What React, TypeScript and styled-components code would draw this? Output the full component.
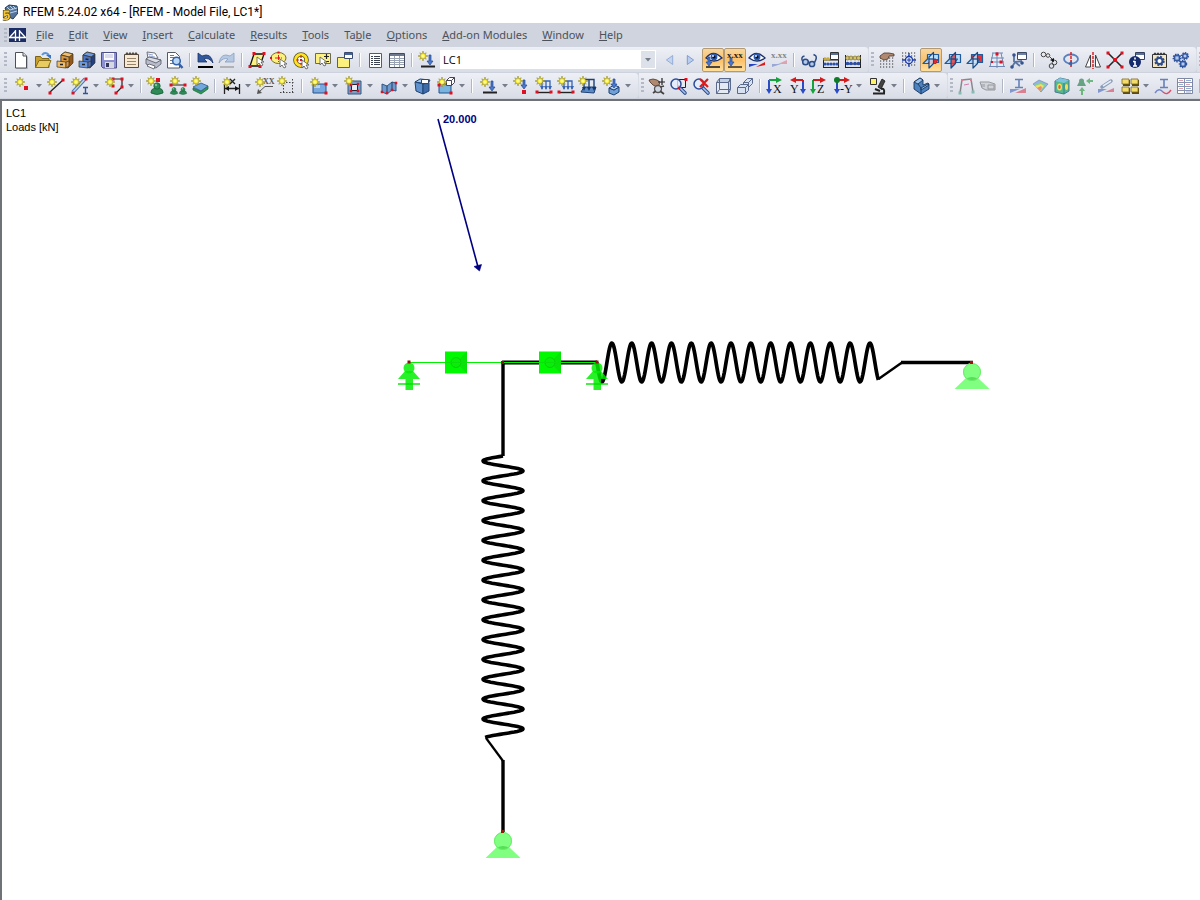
import React from "react";
import styled, { createGlobalStyle, css } from "styled-components";

const GlobalStyle = createGlobalStyle`
  *, *::before, *::after { box-sizing: border-box; }
  body { margin: 0; background: #fff; }
`;

/* ---------- shared icon parts ---------- */

type At = { x: number; y: number };

const Star = ({ x, y }: At) => (
  <g transform={`translate(${x} ${y})`}>
    <path
      d="M0-5L.9-2L3.200-3.200L2-.9L5 0L2 .9L3.200 3.200L.9 2L0 5L-.9 2L-3.200 3.200L-2 .9L-5 0L-2-.9L-3.200-3.200L-.9-2z"
      fill="#ffef30"
      stroke="#8f8628"
      strokeWidth=".6"
    />
    <circle r="1.500" fill="#fffb90" />
  </g>
);

const Dot = ({ x, y, s = 3, c = "#e01020" }: At & { s?: number; c?: string }) => (
  <rect x={x - s / 2} y={y - s / 2} width={s} height={s} fill={c} />
);

const Cursor = ({ x, y }: At) => (
  <path d={`M${x} ${y}v8l2-2 2 3 2-1-2-3h3z`} fill="#fff" stroke="#555" strokeWidth=".8" />
);

const DownArrow = ({ x, y, h = 8 }: At & { h?: number }) => (
  <path d={`M${x - 1} ${y}h2v${h - 4}h2l-3 4-3-4h2z`} fill="#4a78d0" stroke="#24488f" strokeWidth=".7" />
);

const DottedGrid = ({ x, y, w, h }: At & { w: number; h: number }) => (
  <g stroke="#333" strokeWidth="1.2" strokeDasharray="1.2 1.8">
    {Array.from({ length: Math.floor(h / 3) + 1 }, (_, i) => (
      <path key={i} d={`M${x} ${y + i * 3}h${w}`} />
    ))}
  </g>
);

const Glass = ({ x, y }: At) => (
  <g>
    <path d={`M${x + 3} ${y + 3}l6 6`} stroke="#2c4c8c" strokeWidth="3.600" strokeLinecap="round" />
    <path d={`M${x + 4} ${y + 4}l5 5`} stroke="#a8c4ee" strokeWidth="1.600" strokeLinecap="round" />
    <circle cx={x} cy={y} r="5" fill="#e3edfb" fillOpacity=".8" stroke="#2b4a9a" strokeWidth="1.500" />
  </g>
);

const Eye = ({ x, y }: At) => (
  <g transform={`translate(${x} ${y})`}>
    <path d="M-8 1Q-1-8 8 1Q0 7-8 1z" fill="#fff" stroke="#1d2f66" strokeWidth="1.300" />
    <circle r="3.400" fill="#2d5cb0" />
    <circle r="1.600" fill="#06102e" />
    <circle cx="-1" cy="-1" r=".9" fill="#fff" />
  </g>
);

const Axis = ({ letter, vertical, horizontal, flip, dot }: { letter: string; vertical: string; horizontal: string; flip?: boolean; dot?: boolean }) => (
  <g>
    <g transform={flip ? "translate(20 0) scale(-1 1)" : undefined}>
      <path d="M4 4v11" stroke={vertical} strokeWidth="2" />
      <path d="M1 13h6l-3 5z" fill={vertical} />
      <path d="M4 4h9" stroke={horizontal} strokeWidth="2" />
      <path d="M11 1l6 3-6 3z" fill={horizontal} />
      {dot && <circle cx="4" cy="4" r="3" fill="#0c7c28" />}
    </g>
    <text x={flip ? 3 : letter.length > 1 ? 7 : 8} y="17" fontFamily="Liberation Serif, serif" fontSize="12" fill="#111">
      {letter}
    </text>
  </g>
);

const Cabinet = ({ light, mid, dark }: { light: string; mid: string; dark: string }) => (
  <g stroke="#3b3222" strokeWidth=".7">
    <path d="M6 5l4-3 8 2v9l-5 5-7-2z" fill={dark} />
    <path d="M6 5l4-3 8 2-4 3z" fill={light} />
    <path d="M6 5l8 2v6l-8-1z" fill={mid} />
    <path d="M2 11l9 1v6l-9-1z" fill={light} />
    <path d="M11 12l3-1v5l-3 2z" fill={mid} />
    <path d="M8.500 9l3 .500M5 14.500h3" stroke="#222" strokeWidth="1.500" />
  </g>
);

const Planes = ({ fill }: { fill: "h" | "v" | "f" }) => (
  <g strokeLinejoin="round" strokeWidth="1.200">
    <path d="M6.500 4.500h11v8h-11z" fill={fill === "f" ? "#ee3030" : "#b9dcf6"} stroke="#1f5a9c" />
    <path d="M2 13.500l4.500-4.500h8l-3 4.500z" fill="#b5d6f4" fillOpacity=".9" stroke="#1f5a9c" />
    {fill === "h" && <path d="M7 13.500l3-4h7l-2 4z" fill="#e82828" stroke="#a01c28" strokeWidth=".8" />}
    <path d="M8 7l4.500-4.500v11L8 18z" fill={fill === "v" ? "#e83a3a" : "#d4e8fa"} fillOpacity=".8" stroke="#174a86" />
    <path d="M8 9h4.500" stroke="#174a86" />
  </g>
);

const Support = ({ x, y, s = 1, c = "#2e8b57" }: At & { s?: number; c?: string }) => (
  <g transform={`translate(${x} ${y}) scale(${s})`}>
    <path d="M-6 5q0-3 4-4h4q4 1 4 4v1q-6 3-12 0z" fill={c} stroke="#145f34" strokeWidth=".8" />
    <circle cy="-1" r="3.200" fill={c} stroke="#145f34" strokeWidth=".8" />
    <circle cx="-1" cy="-2" r="1.200" fill="#7cc79a" />
  </g>
);

const Gear = ({ x, y, r = 2.4 }: At & { r?: number }) => (
  <g fill="none" stroke="#2e539c">
    <circle cx={x} cy={y} r={r + 0.9} strokeWidth="1.500" strokeDasharray="1.400 1.100" />
    <circle cx={x} cy={y} r={r} fill="#7f9fd8" strokeWidth="1.200" />
    <circle cx={x} cy={y} r=".8" fill="#fff" stroke="none" />
  </g>
);

/* ---------- icons, each on a 20 x 20 grid ---------- */

const icons: Record<string, React.ReactNode> = {
  new: (
    <g>
      <path d="M5 3h8l4 4v12H5z" fill="#b8bcc6" />
      <path d="M4.500 2.500h7.500l3.500 3.500v12h-11z" fill="#fff" stroke="#4c5058" />
      <path d="M12 2.500v3.500h3.500" fill="#e0e3ea" stroke="#4c5058" />
    </g>
  ),
  open: (
    <g>
      <path d="M2.500 17.500v-11h5l1.500 2h7v9z" fill="#c79f2c" stroke="#7b6315" />
      <path d="M2.500 17.500l3.500-7h12l-3 7z" fill="#e8cc62" stroke="#8b7019" />
      <path d="M9 5q3-4 7 0" fill="none" stroke="#5a94d8" strokeWidth="2" />
      <path d="M13 5h5v4z" fill="#3a73c4" />
    </g>
  ),
  cabinet: <Cabinet light="#f0bd6c" mid="#d9963d" dark="#94591a" />,
  cabinetBlue: <Cabinet light="#6f9ae0" mid="#4a74c8" dark="#24407f" />,
  save: (
    <g>
      <path d="M2.500 2.500h15v15.500H4l-1.500-1.500z" fill="#8c8fd2" stroke="#4c4f88" />
      <path d="M5 3h10v7H5z" fill="#fbfbff" />
      <path d="M6 5h8M6 7h8" stroke="#b7bad8" />
      <path d="M6 12h9v6H6z" fill="#d6d8e2" />
      <path d="M7 13h3v4H7z" fill="#34375c" />
    </g>
  ),
  notes: (
    <g>
      <path d="M3.500 4.500h14v13h-14z" fill="#f7e9d2" stroke="#54493c" />
      <path d="M5 4.500q1-3 2 0M8 4.500q1-3 2 0M11 4.500q1-3 2 0M14 4.500q1-3 2 0" fill="none" stroke="#54493c" strokeWidth="1.300" />
      <path d="M6 8.500h9M6 11.500h9M6 14.500h9" stroke="#96856b" />
    </g>
  ),
  print: (
    <g stroke="#60636e" strokeWidth=".9">
      <path d="M5 9l-1-7 8 1 3 5z" fill="#fff" />
      <path d="M3 9l3-2 12 3v4l-5 4L3 14z" fill="#b9bccb" />
      <path d="M3 9l3-2 12 3-5 3z" fill="#dddfe8" />
      <path d="M6 14l6 2-1 3-7-3z" fill="#fff" />
      <path d="M6 6l6 1M5 4l5 1" stroke="#8a9cc8" />
    </g>
  ),
  preview: (
    <g>
      <path d="M2.500 2.500h8l4 4v11.500h-12z" fill="#fff" stroke="#555a62" />
      <path d="M5 7.500h5M5 10.500h4M5 13.500h3M5 5.500h4" stroke="#777" />
      <circle cx="11.500" cy="11" r="3.800" fill="#b9d7f6" stroke="#3562a6" strokeWidth="1.500" />
      <path d="M14 14l3.500 4" stroke="#3562a6" strokeWidth="2.500" />
    </g>
  ),
  undo: (
    <g>
      <path d="M7 6q9-4 11 7q-4-6-9-4l3 3H3V3z" fill="#31599e" stroke="#1a3468" strokeWidth=".8" />
      <path d="M3 17h15" stroke="#000" strokeWidth="2" />
    </g>
  ),
  redo: (
    <g opacity=".65">
      <path d="M13 6q-9-4-11 7q4-6 9-4l-3 3h9V3z" fill="#9dbade" stroke="#5a7aa8" strokeWidth=".8" />
      <path d="M3 17h14" stroke="#888" strokeWidth="1.600" />
    </g>
  ),
  selectPoly: (
    <g>
      <path d="M7 4h10l-4 12H3z" fill="#fbf080" stroke="#111" strokeWidth="1.300" />
      <Dot x={7} y={3.5} /><Dot x={17} y={3.5} /><Dot x={3} y={16.5} /><Dot x={13} y={16.5} />
      <Cursor x={10} y={7} />
    </g>
  ),
  selectEllipse: (
    <g>
      <ellipse cx="9.500" cy="8" rx="7.500" ry="5.500" fill="#fbf080" stroke="#7b6b22" />
      <path d="M9.500 5v7M6 8h7" stroke="#d22" strokeDasharray="2 1" />
      <Dot x={9.5} y={8} s={2} /><Dot x={2} y={8} s={2} /><Dot x={9.5} y={2.5} s={2} />
      <Cursor x={11} y={9} />
    </g>
  ),
  selectRing: (
    <g>
      <circle cx="10" cy="10" r="5.500" fill="#fff" stroke="#58501b" strokeWidth="4.600" />
      <circle cx="10" cy="10" r="5.500" fill="none" stroke="#ffe423" strokeWidth="3" />
      <path d="M10 5v3M5 10h3M10 13v2" stroke="#d22" strokeWidth="1.200" />
      <Dot x={10} y={10} s={2} />
      <Cursor x={11} y={10} />
    </g>
  ),
  selectPlus: (
    <g>
      <path d="M2.500 3.500h15v10h-15z" fill="#fbf080" stroke="#6c6a50" />
      <path d="M11 6.500h5M13.500 4v5M11 11.500h5" stroke="#222" strokeWidth="1.200" />
      <Cursor x={7} y={7} />
    </g>
  ),
  selectWindow: (
    <g>
      <path d="M2.500 7.500h12v10h-12z" fill="#fbef7e" stroke="#6c6420" />
      <path d="M9.500 2.500h8v6h-8z" fill="#fff" stroke="#3a4a6c" />
      <path d="M10 3h7v2h-7z" fill="#4064a0" />
    </g>
  ),
  list: (
    <g>
      <path d="M4.500 3.500h12v14h-12z" fill="#fff" stroke="#545b6a" />
      <path d="M6 6.500h2M9 6.500h6M6 8.500h2M9 8.500h6M6 10.500h2M9 10.500h6M6 12.500h2M9 12.500h6M6 14.500h2M9 14.500h6" stroke="#3b4250" />
    </g>
  ),
  table: (
    <g>
      <path d="M2.500 3.500h15v14h-15z" fill="#fff" stroke="#444b5a" />
      <path d="M3 4h14v2H3z" fill="#6c7890" />
      <path d="M3 8.500h14M3 10.500h14M3 12.500h14M3 14.500h14M7.500 6v11M12.500 6v11" stroke="#9aa3b4" />
    </g>
  ),
  newLoad: (
    <g>
      <DownArrow x={13} y={5} h={10} />
      <path d="M4 16.500h14" stroke="#222" strokeWidth="2" />
      <Star x={6} y={6} />
    </g>
  ),
  prev: <path d="M13 5L6 10l7 5z" fill="#c3d4ee" stroke="#8ea8d4" />,
  next: <path d="M7 5l7 5-7 5z" fill="#b9cdee" stroke="#7795cb" />,
  eyeLoad: (
    <g>
      <Eye x={11} y={7} />
      <DownArrow x={6} y={7} h={9} />
      <path d="M3 17h14" stroke="#222" strokeWidth="1.600" />
    </g>
  ),
  valueLoad: (
    <g>
      <text x="2" y="8" fontFamily="Liberation Serif, serif" fontSize="9" fontWeight="700" fill="#222">x.xx</text>
      <DownArrow x={6} y={8} h={8} />
      <path d="M3 17h14" stroke="#222" strokeWidth="1.400" />
    </g>
  ),
  eyeResult: (
    <g>
      <Eye x={10} y={7} />
      <path d="M2 17v-3l9 0z" fill="#2546c8" />
      <path d="M9 17l9-5v3z" fill="#dc1a1a" />
    </g>
  ),
  valueResult: (
    <g opacity=".6">
      <text x="2" y="8" fontFamily="Liberation Serif, serif" fontSize="9" fontWeight="700" fill="#444">x.xx</text>
      <path d="M3 17v-3h9z" fill="#6a80c8" />
      <path d="M9 14l9-4v4z" fill="#d87a8a" />
    </g>
  ),
  glasses: (
    <g fill="none" stroke="#2c4c86" strokeWidth="1.500">
      <circle cx="6.500" cy="12" r="2.800" fill="#b4c8e8" />
      <circle cx="13" cy="14" r="2.600" fill="#b4c8e8" />
      <path d="M3.500 11q-2-4 2-5M15.500 12.500q3-5 1-7l-2-1M9 12l2 1" />
    </g>
  ),
  abacusWindow: (
    <g>
      <path d="M2.500 8v10M17.500 8v10M2 10h16M2 17.500h16" stroke="#222" />
      {[4, 7, 10, 13, 16].map((x) => <circle key={x} cx={x} cy="14" r="1.600" fill="#2a4fa8" />)}
      {[4, 7].map((x) => <circle key={x} cx={x} cy="9" r="1.800" fill="#c8a93a" />)}
      <path d="M9.500 2.500h8v7h-8z" fill="#fff" stroke="#333" />
      <path d="M10 3h7v2h-7z" fill="#5a6f98" />
    </g>
  ),
  abacus: (
    <g>
      <path d="M2.500 5v13M17.500 5v13M2 8h16M2 14h16M2 17.500h16" stroke="#222" />
      {[4.5, 8, 12, 15.5].map((x) => <circle key={x} cx={x} cy="13.500" r="1.800" fill="#2a4fa8" />)}
      {[4.5, 8, 12, 15.5].map((x) => <circle key={x} cx={x} cy="8" r="2" fill="#d1c470" stroke="#6d5a16" strokeWidth=".6" />)}
    </g>
  ),
  handGrid: (
    <g>
      <DottedGrid x={3} y={8} w={15} h={9} />
      <path d="M3 6l4-3h5l5 1v2h-5l-1 3-4 1-4-2z" fill="#b08a70" stroke="#4c3325" strokeWidth=".8" />
    </g>
  ),
  snapGrid: (
    <g>
      <DottedGrid x={3} y={3} w={15} h={14} />
      <path d="M10 3v14M3 10h14" stroke="#1c3cac" strokeWidth="1.300" />
      <circle cx="10" cy="10" r="3.500" fill="#dfe7fa" stroke="#1c3cac" strokeWidth="1.300" />
      <path d="M10 8v4M8 10h4" stroke="#1c3cac" />
    </g>
  ),
  planeH: <Planes fill="h" />,
  planeV: <Planes fill="v" />,
  planeF: <Planes fill="f" />,
  tiltedGrid: (
    <g>
      <path d="M5 3h10l3 14H2z" fill="#e4ecf6" />
      <path d="M5 3h11M4 8h13M3 12h14M2 16.500h16M6 3L3 17M10 2v16M14 3l3 14" stroke="#7088b4" />
      <Dot x={10} y={4} /><Dot x={14} y={12} /><Dot x={5} y={12} s={2} />
    </g>
  ),
  windowTool: (
    <g>
      <path d="M8.500 2.500h9v7h-9z" fill="#fff" stroke="#3e4a62" />
      <path d="M9 3h8v2H9z" fill="#6c80aa" />
      <path d="M5 4v8M3 17l3-5 5 4M6 12l7-1" stroke="#5874a4" strokeWidth="1.800" fill="none" />
      <circle cx="5" cy="5" r="1.800" fill="#38548e" />
      <circle cx="3" cy="17" r="1.800" fill="#38548e" />
      <circle cx="13" cy="13" r="1.800" fill="#38548e" />
    </g>
  ),
  connect: (
    <g fill="none" stroke="#444">
      <circle cx="4.500" cy="4.500" r="2.300" />
      <circle cx="9" cy="5.500" r="1.800" fill="#eee" />
      <circle cx="15.500" cy="12.500" r="2.300" />
      <circle cx="12.500" cy="16" r="2.300" />
      <path d="M11 7l3 3" />
      <path d="M15 8v4l-4-2z" fill="#111" stroke="none" />
    </g>
  ),
  rotate: (
    <g>
      <ellipse cx="10" cy="9" rx="7" ry="4.500" fill="none" stroke="#5a80bd" strokeWidth="1.800" />
      <path d="M10 2v16" stroke="#d21818" strokeWidth="1.400" strokeDasharray="3 1" />
      <path d="M7 14l4-4v6z" fill="#3f62a4" />
    </g>
  ),
  mirror: (
    <g fill="#fff" stroke="#444">
      <path d="M7.500 5v12H2.500z" />
      <path d="M12.500 5v12h5z" />
      <path d="M10 2v17" stroke="#d21818" strokeWidth="1.400" strokeDasharray="3 1" />
    </g>
  ),
  cross: (
    <g>
      <path d="M3 3l14 14M17 3L3 17" stroke="#222" strokeWidth="1.500" />
      <Dot x={3} y={3} /><Dot x={17} y={3} /><Dot x={3} y={17} /><Dot x={17} y={17} />
      <Dot x={10} y={10} s={4} />
    </g>
  ),
  info: (
    <g>
      <path d="M8.500 2.500h9v7h-9z" fill="#fff" stroke="#333f5a" />
      <path d="M9 3h8v2H9z" fill="#5a6f98" />
      <circle cx="8" cy="12" r="6" fill="#132a6c" />
      <path d="M8 7.500v2M8 11v5M6 11.500h2M6 16h4" stroke="#fff" strokeWidth="1.600" />
    </g>
  ),
  gearBox: (
    <g>
      <path d="M3.500 4.500h14v13h-14z" fill="#f4e6c2" stroke="#333" />
      <path d="M5 4.500q1-3 2 0M8 4.500q1-3 2 0M11 4.500q1-3 2 0M14 4.500q1-3 2 0" fill="none" stroke="#333" strokeWidth="1.200" />
      <circle cx="10.500" cy="11" r="4.200" fill="none" stroke="#2d4c8c" strokeWidth="2" strokeDasharray="1.900 1.400" />
      <circle cx="10.500" cy="11" r="3" fill="#fff" stroke="#2d4c8c" strokeWidth="2" />
    </g>
  ),
  gears: <g><Gear x={6} y={8} r={2.8} /><Gear x={14} y={6} /><Gear x={12} y={14} r={2.6} /></g>,

  newNode: <g><Star x={7} y={6} /><Dot x={13} y={12} s={4} /></g>,
  newLine: (
    <g>
      <path d="M4 16L17 4" stroke="#222" strokeWidth="1.300" />
      <Star x={6} y={6} /><Dot x={4} y={17} /><Dot x={17} y={4} />
    </g>
  ),
  newMember: (
    <g>
      <path d="M3 16L15 3" stroke="#4d77b4" strokeWidth="3.500" />
      <path d="M3 16L15 3" stroke="#bcd6f2" strokeWidth="1.500" />
      <Star x={6} y={6} /><Dot x={3} y={17} /><Dot x={16} y={3} />
      <path d="M13 11.500h5M13 17.500h5M15.500 12v5" stroke="#30549a" strokeWidth="1.400" />
    </g>
  ),
  newPolyline: (
    <g>
      <path d="M8 3h9v8l-6 6" fill="none" stroke="#222" strokeWidth="1.200" />
      <Dot x={8} y={3} /><Dot x={17} y={3} /><Dot x={17} y={11} /><Dot x={11} y={17} /><Dot x={8} y={10} />
      <Star x={5} y={6} />
    </g>
  ),
  nodeSupport: <g><Support x={11} y={11} /><Dot x={12} y={4} s={4} /><Star x={5} y={5} /></g>,
  lineSupport: (
    <g>
      <path d="M3 9h14" stroke="#222" /><Support x={6} y={14} s={0.6} /><Support x={15} y={14} s={0.6} />
      <Star x={7} y={5} /><Dot x={3} y={9} /><Dot x={17} y={9} />
    </g>
  ),
  surfaceSupport: (
    <g>
      <path d="M3 12l8 3 7-5v3l-7 5-8-4z" fill="#2a9a50" stroke="#14633a" strokeWidth=".7" />
      <path d="M3 11l8-4 7 3-7 5z" fill="#71a8de" stroke="#2d588e" strokeWidth=".8" />
      <Star x={6} y={5} />
    </g>
  ),
  dimension: (
    <g>
      <path d="M2.500 8v10M17.500 8v10M3 12.500h14" stroke="#222" strokeWidth="1.300" />
      <path d="M3 12.500l4-2.500v5zM17 12.500l-4-2.500v5z" fill="#111" />
      <Star x={5} y={6} />
      <path d="M8 3l5 5M13 3L8 8" stroke="#222" strokeWidth="1.300" />
    </g>
  ),
  comment: (
    <g>
      <text x="8" y="8" fontFamily="Liberation Serif, serif" fontSize="8" fontWeight="700" fill="#555">XX</text>
      <path d="M18 10.500H10L4 16" stroke="#555" fill="none" />
      <path d="M2 18l1-5 4 4z" fill="#555" />
      <Star x={5} y={6} />
    </g>
  ),
  guide: (
    <g>
      <path d="M6.500 3v15M15.500 3v15M3 6.500h15M3 16.500h15" stroke="#444" strokeDasharray="1.500 1.500" />
      <Star x={5} y={5} />
    </g>
  ),
  surface: (
    <g>
      <path d="M4 8h13v9H4z" fill="#79a9de" stroke="#24528e" />
      <path d="M5 9h6v3H5z" fill="#b4d2f2" />
      <Star x={6} y={6} /><Dot x={17} y={8} /><Dot x={17} y={17} />
    </g>
  ),
  opening: (
    <g>
      <path d="M4 5h13v13H4z" fill="#78a0cc" stroke="#34587c" />
      <path d="M7.500 8.500h6v6h-6z" fill="#e9eef6" stroke="#223" />
      <Dot x={7} y={9} s={2.5} /><Dot x={14} y={8} s={2.5} /><Dot x={7} y={15} s={2.5} /><Dot x={14} y={15} s={2.5} />
      <Star x={5} y={5} />
    </g>
  ),
  fold: (
    <g>
      <path d="M3 8l5 2 5-4 4 1v8l-4-1-5 4-5-2z" fill="#6f9ccf" stroke="#2c5684" />
      <path d="M8 10v7M13 6v8" stroke="#1c3c66" />
      <Dot x={3} y={16} s={2.5} /><Dot x={8} y={17} s={2.5} /><Dot x={17} y={7} s={2.5} /><Dot x={13} y={14} s={2.5} />
    </g>
  ),
  solid: (
    <g stroke="#1d4273">
      <path d="M3 6l5-3 10 1-2 4z" fill="#a9caee" />
      <path d="M3 6l8 2v10l-7-3z" fill="#5f92cd" />
      <path d="M11 8l6-1v8l-6 3z" fill="#3f6ca8" />
      <path d="M9.500 3.500h7v4h-7z" fill="#fff" stroke="#34466a" />
    </g>
  ),
  newSolid: (
    <g>
      <path d="M3 8h12v9H3z" fill="#79b4de" stroke="#24528e" />
      <path d="M10.500 4.500h5v5h-5zM10.500 4.500l3-3h5v5l-3 3M15.500 4.500l3-3" fill="#fff" stroke="#445" />
      <Star x={6} y={6} /><Dot x={3} y={9} /><Dot x={15} y={17} />
    </g>
  ),
  nodalLoad: <g><DownArrow x={12} y={4} h={9} /><Star x={6} y={5} /><Dot x={12} y={16} s={4} /></g>,
  memberLoad: (
    <g>
      <path d="M4 5h12v8M8 5v8M12 5v8" fill="none" stroke="#3764b4" strokeWidth="1.300" />
      <path d="M6 10h4l-2 4zM10 10h4l-2 4zM14 10h4l-2 4z" fill="#3764b4" />
      <path d="M3 16.500h14" stroke="#222" strokeWidth="1.400" />
      <Star x={6} y={5} /><Dot x={3} y={16} /><Dot x={17} y={16} />
    </g>
  ),
  surfaceLoad: (
    <g>
      <path d="M3 16l3-5h12l-2 6z" fill="#5b8cc8" stroke="#1f4075" />
      <path d="M6 3.500h10v9M6 4v9M11 4v8" stroke="#1f4075" strokeWidth="1.400" fill="none" />
      <path d="M4 11h4l-2 4zM9 11h4l-2 4zM14 11h4l-2 4z" fill="#12376e" />
      <Star x={5} y={5} />
    </g>
  ),
  solidLoad: (
    <g>
      <path d="M7 12l5 2 5-3v5l-5 3-5-2z" fill="#6fa0d6" stroke="#1f4075" />
      <path d="M7 12l5-3 5 2-5 3z" fill="#b6d3f1" stroke="#1f4075" />
      <DownArrow x={12} y={3} h={9} /><Star x={5} y={5} />
    </g>
  ),
  pan: (
    <g>
      <path d="M2 4l4-1 4 1 3 2-1 3-2 2-4-2-3-3z" fill="#b08a70" stroke="#493125" strokeWidth=".8" />
      <path d="M15 2v7M11 6h7" stroke="#222" strokeWidth="1.200" />
      <circle cx="11" cy="13" r="3.500" fill="#cfd5df" stroke="#555" strokeWidth="1.300" />
      <path d="M13 15l4 3M6 17l3-2M13 11l4-1" stroke="#444" strokeWidth="1.800" />
    </g>
  ),
  zoomWindow: (
    <g>
      <path d="M8.500 3.500h8v8h-8z" fill="#e8eaf0" stroke="#222" />
      <Glass x={7} y={8} /><Dot x={17} y={3.5} /><Dot x={10} y={12} s={2.5} />
    </g>
  ),
  zoomX: (
    <g>
      <Glass x={8} y={8} />
      <path d="M9 3l8 8M17 3L9 11" stroke="#dc1a1a" strokeWidth="2.200" />
    </g>
  ),
  box: (
    <g fill="none" stroke="#5a6a8c">
      <path d="M3.500 6.500l3-4h11l-2 4zM15.500 6.500l2-4v11l-2 4z" fill="#c3cfe2" />
      <path d="M3.500 6.500h12v11h-12z" fill="#e4eaf4" />
      <path d="M6.500 2.500v11h11M3.500 17.500l3-4" />
    </g>
  ),
  boxes: (
    <g fill="#d6e2f2" stroke="#5a6a8c">
      <path d="M8.500 6.500h5v5h-5zM8.500 6.500l4-4h5v5l-4 4M13.500 6.500l4-4" />
      <path d="M2.500 11.500h8v6h-8zM2.500 11.500l3-3h8v6l-3 3M10.500 11.500l3-3" />
    </g>
  ),
  axisX: <Axis letter="X" vertical="#2c4cc4" horizontal="#17a33c" />,
  axisY: <Axis letter="Y" vertical="#2c4cc4" horizontal="#d41c1c" flip />,
  axisZ: <Axis letter="Z" vertical="#17a33c" horizontal="#d41c1c" />,
  axisMinusY: <Axis letter="-Y" vertical="#2c4cc4" horizontal="#d41c1c" dot />,
  microscope: (
    <g>
      <path d="M14 3l3 2-4 8-3-2z" fill="#444" stroke="#111" strokeWidth=".8" />
      <path d="M13 13q4-1 3 4M5 17.500h12M7 13l5 2" fill="none" stroke="#222" strokeWidth="2" />
      <path d="M2.500 2.500h6v6h-6z" fill="#fff36a" stroke="#333" />
    </g>
  ),
  section: (
    <g stroke="#17355d" strokeWidth=".9">
      <path d="M3 6l6-4 3 2v5l5-2 1 1v5l-8 5-7-5z" fill="#4c82c0" />
      <path d="M3 6l6-4 3 2-5 4zM10 12l7-4 1 1-8 5z" fill="#9ec3ea" />
      <path d="M7 8l3 4v6" fill="none" />
    </g>
  ),
  frame: (
    <g opacity=".65" fill="none">
      <path d="M4 17L6 4l9-1 2 13" stroke="#555" strokeWidth="1.500" />
      <path d="M8 9l5-1" stroke="#c48" />
      <Dot x={6} y={4} c="#d46" s={2} /><Dot x={15} y={4} c="#d46" s={2} />
      <Dot x={4} y={17} c="#5a9" /><Dot x={17} y={16} c="#5a9" />
    </g>
  ),
  roller: (
    <g opacity=".6" fill="#c4c8d0" stroke="#666">
      <path d="M2 6h9l6 2v6H8L4 12z" />
      <path d="M10 9h6v4h-6zM4 8v3M6 8v3" />
    </g>
  ),
  forces: (
    <g>
      <path d="M7 3.500h8M11 4v7M7 11.500h8" stroke="#6680b8" strokeWidth="1.600" />
      <path d="M2 13h10l-10 4z" fill="#8397cf" /><path d="M7 17l11-5v5z" fill="#db8090" />
    </g>
  ),
  contour: (
    <g>
      <path d="M3 8l6-4 9 4-7 8z" fill="#8fb4e8" stroke="#6a86a8" strokeWidth=".6" />
      <path d="M4 9l7-3 5 3-6 6z" fill="#8ad18a" /><path d="M5 10l6-2 3 2-4 5z" fill="#f1df62" /><path d="M7 12l4-2 1 2-2 3z" fill="#ea8b6d" />
    </g>
  ),
  cube: (
    <g>
      <path d="M3 5l5-3 9 2v11l-5 3-9-2z" fill="#54b98f" stroke="#4a7a90" />
      <path d="M3 5l9 2 5-3-9-2z" fill="#7fc4de" />
      <ellipse cx="7.500" cy="11" rx="2.500" ry="3.500" fill="#f0e05c" /><ellipse cx="7.500" cy="11" rx="1.200" ry="2" fill="#df5c4c" />
      <ellipse cx="14.500" cy="11" rx="1.500" ry="3" fill="#f0e05c" /><path d="M12 7v11" stroke="#3c7c90" />
    </g>
  ),
  reactions: (
    <g opacity=".75">
      <path d="M3 10l2-4h5l2 4z" fill="#3e8d60" /><circle cx="7.500" cy="5" r="2.500" fill="#3e8d60" />
      <path d="M8 11l3 4h-2v4H7v-4H5zM12 5l4-3v2h3v2h-3v2z" fill="#49a75d" />
    </g>
  ),
  deform: (
    <g>
      <path d="M6 11L15 5" stroke="#8c9cb8" strokeWidth="3.500" strokeLinecap="round" /><path d="M7 10L15 5" stroke="#e4ecf6" strokeWidth="1.500" />
      <path d="M2 13h9l-9 4z" fill="#8397cf" /><path d="M9 16l9-4v4z" fill="#db8090" />
    </g>
  ),
  panels: (
    <g>
      {[[2, 3], [11, 3], [2, 11], [11, 11]].map(([x, y]) => (
        <g key={`${x}-${y}`}>
          <path d={`M${x + 1} ${y + 1}h7v6h-7z`} fill="#5c4b12" />
          <path d={`M${x} ${y}h7v5h-7z`} fill="#f3dc6c" stroke="#7c6820" strokeWidth=".8" />
        </g>
      ))}
    </g>
  ),
  moment: (
    <g>
      <path d="M7 3.500h8M11 4v7M7 11.500h8" stroke="#6680b8" strokeWidth="1.600" />
      <path d="M2 17q4-6 8-1" fill="none" stroke="#7287c9" strokeWidth="1.400" /><path d="M10 16q4 4 8-2" fill="none" stroke="#d8506c" strokeWidth="1.400" />
    </g>
  ),
  resultTable: (
    <g>
      <path d="M2.500 2.500h15v15h-15z" fill="#fff" stroke="#7d88a5" />
      <path d="M3 6.500h14M3 10.500h14M3 14.500h14M9.500 3v14" stroke="#8793b0" />
      <path d="M4 4.500h4M11 8.500h4M4 12.500h4" stroke="#dca0ac" /><path d="M11 4.500h5M4 8.500h4M11 12.500h5M11 16h5" stroke="#98a9d4" />
    </g>
  ),
};

/* ---------- chrome ---------- */

const Window = styled.div`
  display: flex;
  flex-direction: column;
  min-height: 100vh;
  font-family: "Open Sans", "Noto Sans", sans-serif;
  font-size: 12px;
  color: #000;
`;

const TitleBar = styled.header`
  display: flex;
  align-items: center;
  gap: 5px;
  height: 23px;
  padding-left: 2px;
  background: #fff;
`;

const Title = styled.h1`
  margin: 0;
  font-family: Roboto, "Open Sans", sans-serif;
  font-size: 12px;
  font-weight: 400;
  line-height: 16px;
  white-space: pre;
`;

const MenuBar = styled.nav`
  display: flex;
  align-items: center;
  gap: 15px;
  height: 24px;
  padding-left: 4px;
  background: #cfd4de;
`;

const MenuLead = styled.span`
  display: flex;
  align-items: center;
  gap: 2px;
  margin-right: -5px;
`;

const MenuButton = styled.button`
  padding: 0;
  border: 0;
  background: none;
  font-family: "Noto Sans", "Open Sans", sans-serif;
  font-size: 11px;
  line-height: 16px;
  color: #4c515c;
  white-space: nowrap;
`;

const ToolRow = styled.div`
  display: flex;
  height: 26px;
  background: #cdd2dc;
  overflow: hidden;
`;

const ToolBar = styled.div<{ $grow?: boolean }>`
  display: flex;
  flex: ${(p) => (p.$grow ? "1 0 auto" : "none")};
  align-items: center;
  height: 25px;
  padding-right: 4px;
  border-right: 1px solid #d9dde5;
  border-radius: 0 4px 4px 0;
  background: linear-gradient(#eef0f6, #e3e6ee 50%, #d9dde6);
`;

const Grip = styled.span<{ $lead?: boolean }>`
  flex: none;
  width: 3px;
  height: 15px;
  margin: ${(p) => (p.$lead ? "0" : "0 2px 0 2px")};
  background: repeating-linear-gradient(#b2b8c4 0 2px, transparent 2px 4px);
`;

const LeadSpace = styled.span`
  flex: none;
  display: flex;
  width: 10px;
  padding-left: 4px;
`;

const Divider = styled.span`
  flex: none;
  width: 2px;
  height: 14px;
  margin: 0 3px;
  border-left: 1px solid #b0b6c3;
  border-right: 1px solid #fff;
`;

const ToolButton = styled.button<{ $kind?: "split" | "narrow"; $active?: boolean }>`
  flex: none;
  display: flex;
  align-items: center;
  justify-content: center;
  gap: 3px;
  width: ${(p) => (p.$kind === "split" ? 35 : p.$kind === "narrow" ? 20 : 22)}px;
  height: 24px;
  padding: 0;
  border: 1px solid transparent;
  border-radius: 2px;
  background: none;
  ${(p) =>
    p.$active &&
    css`
      border-color: #b39a74;
      background: linear-gradient(#f8d6a0, #fcc067 50%, #ffdf9c);
    `}
`;

const ComboBox = styled.label`
  flex: none;
  display: grid;
  grid-template-columns: 1fr 15px;
  width: 216px;
  height: 19px;
  margin: 0 4px 0 2px;
  background: #fff;
`;

const ComboSelect = styled.select`
  grid-area: 1 / 1 / 2 / 3;
  width: 100%;
  padding: 0 3px;
  border: 0;
  appearance: none;
  background: none;
  font-family: "Open Sans", "Noto Sans", sans-serif;
  font-size: 11px;
  color: #000;
`;

const ComboArrow = styled.span`
  grid-area: 1 / 2;
  display: flex;
  align-items: center;
  justify-content: center;
  margin: 1px 1px 1px 0;
  background: #dde1e9;
  pointer-events: none;
`;

const Gap = styled.span`
  flex: none;
  width: 2px;
`;

const Caret = () => (
  <svg width="6" height="4" viewBox="0 0 6 4" aria-hidden="true">
    <path d="M0 0h6L3 3.500z" fill="#777d89" />
  </svg>
);

const Icon = ({ name }: { name: string }) => (
  <svg width="20" height="20" viewBox="0 0 20 20" aria-hidden="true">
    {icons[name]}
  </svg>
);

/* "|" is a divider, a trailing "+" marks a drop-down half, a leading "*" a pressed button */
const Tools = ({ items }: { items: string }) => (
  <>
    {items.split(" ").map((item, i) => {
      if (item === "|") return <Divider key={i} />;
      const name = item.replace(/[*+]/g, "");
      const split = item.endsWith("+");
      return (
        <ToolButton
          key={i}
          type="button"
          aria-label={name}
          $active={item.startsWith("*")}
          $kind={split ? "split" : name === "prev" || name === "next" ? "narrow" : undefined}
        >
          <Icon name={name} />
          {split && <Caret />}
        </ToolButton>
      );
    })}
  </>
);

const menus: [string, string, string][] = [
  ["", "F", "ile"],
  ["", "E", "dit"],
  ["", "V", "iew"],
  ["", "I", "nsert"],
  ["", "C", "alculate"],
  ["", "R", "esults"],
  ["", "T", "ools"],
  ["Ta", "b", "le"],
  ["", "O", "ptions"],
  ["", "A", "dd-on Modules"],
  ["", "W", "indow"],
  ["", "H", "elp"],
];

/* ---------- model view ---------- */

const ModelView = styled.main`
  flex: 1;
  display: grid;
  align-content: start;
  border-top: 2px solid #6f7277;
  border-left: 2px solid #6f7277;
  background: #fff;
`;

const Caption = styled.p`
  grid-area: 1 / 1;
  justify-self: start;
  margin: 0;
  padding: 5px 4px;
  font-family: "Liberation Sans", Arial, sans-serif;
  font-size: 11px;
  line-height: 14px;
`;

const Drawing = styled.svg`
  grid-area: 1 / 1;
  display: block;
  width: 100%;
  height: auto;
`;

const PERIOD = 19.85;
const TURNS = 14.19;

const wave = (toPoint: (along: number, off: number) => string, amp: number) => {
  const points: string[] = [];
  for (let a = 0; a <= PERIOD * TURNS; a += 0.6) {
    points.push(toPoint(a, amp * Math.sin((2 * Math.PI * a) / PERIOD)));
  }
  return points.join(" ");
};

const horizontalSpring = wave((a, o) => `${(597 + a).toFixed(2)},${(362.5 + o).toFixed(2)}`, 19.4);
const verticalSpring = wave((a, o) => `${(503 - o).toFixed(2)},${(456 + a).toFixed(2)}`, 20);

const SlidingSupport = ({ x, y }: At) => (
  <g transform={`translate(${x} ${y})`} fill="#00ee00" fillOpacity=".84">
    <circle cy="6" r="5.500" />
    <path d="M-4 9h8l7 8H-11z" />
    <path d="M-3.500 17h7.500v11h-7.500z" />
    <path d="M-11 22h22" stroke="#00e000" strokeWidth="1.400" />
    <rect x="-1.500" y="-1.500" width="3" height="3" fill="#8c1010" fillOpacity="1" />
  </g>
);

const FixedSupport = ({ x, y }: At) => (
  <g transform={`translate(${x} ${y})`}>
    <path d="M-6 6h12L17.500 17h-35z" fill="#80ff80" />
    <circle r="9" fill="#80ff80" />
    <path d="M-6 6.500Q0 3.500 6 6.500Q0 11-6 6.500z" fill="#55e055" />
    <circle r="8.500" fill="none" stroke="#6cec6c" />
    <rect x="-2" y="-11" width="3" height="3" fill="#a01010" />
  </g>
);

const Hinge = ({ x, y }: At) => (
  <g transform={`translate(${x} ${y})`}>
    <rect x="-11" y="-11" width="22" height="22" fill="#00f800" />
    <path d="M4-4l7-7v22l-7-7z" fill="#08e408" />
    <circle r="5" fill="#08ee08" stroke="#08cf08" />
    <path d="M-11 0h22" stroke="#0be00b" />
  </g>
);

const App = () => (
  <Window>
    <GlobalStyle />
    <TitleBar>
      <svg width="16" height="18" viewBox="0 0 16 18" aria-hidden="true">
        <path d="M3 5l4-3 8 1 1 7-5 6-4-2z" fill="#54749c" stroke="#223b5c" />
        <path d="M5 4l3 3M8 3l3 3M11 3l3 3M8 7l7-2M8 10l7-2" stroke="#bcd3ec" />
        <path d="M7 8.500H2.500v4Q7 10 7 13.500T1 16" fill="none" stroke="#5a4610" strokeWidth="3.200" />
        <path d="M7 8.500H2.500v4Q7 10 7 13.500T1 16" fill="none" stroke="#f3c63a" strokeWidth="1.800" />
      </svg>
      <Title>RFEM 5.24.02 x64 - [RFEM - Model File, LC1*]</Title>
    </TitleBar>

    <MenuBar>
      <MenuLead>
        <Grip $lead />
        <svg width="17" height="14" viewBox="0 0 17 14" aria-hidden="true">
          <path d="M0 0h17v14H0z" fill="#1c2d66" />
          <path d="M6.500 2v11M10.500 2v11M1 9l5.500-6M10.500 3L16 9" stroke="#fff" strokeWidth="1.300" fill="none" />
          <path d="M0 9.500h17" stroke="#fff" strokeWidth="1.600" />
        </svg>
      </MenuLead>
      {menus.map(([pre, key, post]) => (
        <MenuButton key={post} type="button">
          {pre}
          <u>{key}</u>
          {post}
        </MenuButton>
      ))}
    </MenuBar>

    <ToolRow>
      <ToolBar>
        <LeadSpace>
          <Grip $lead />
        </LeadSpace>
        <Tools items="new open cabinet cabinetBlue save notes print preview | undo redo | selectPoly selectEllipse selectRing selectPlus selectWindow | list table | newLoad" />
        <ComboBox>
          <ComboSelect aria-label="Load case" defaultValue="LC1">
            <option>LC1</option>
          </ComboSelect>
          <ComboArrow>
            <Caret />
          </ComboArrow>
        </ComboBox>
        <Tools items="prev next" />
        <Gap />
        <Tools items="*eyeLoad *valueLoad eyeResult valueResult | glasses abacusWindow abacus" />
      </ToolBar>
      <ToolBar>
        <Grip />
        <Tools items="handGrid snapGrid *planeH planeV planeF tiltedGrid windowTool | connect rotate mirror cross info gearBox gears" />
      </ToolBar>
      <ToolBar $grow>
        <Grip />
      </ToolBar>
    </ToolRow>

    <ToolRow>
      <ToolBar>
        <LeadSpace>
          <Grip $lead />
        </LeadSpace>
        <Tools items="newNode+ newLine newMember+ newPolyline+ | nodeSupport lineSupport surfaceSupport | dimension+ comment guide | surface+ opening+ fold+ solid newSolid+ | newLoad+ nodalLoad memberLoad memberLoad surfaceLoad solidLoad+" />
      </ToolBar>
      <ToolBar>
        <Grip />
        <Tools items="pan zoomWindow zoomX box boxes | axisX axisY axisZ axisMinusY+ microscope+ | section+" />
      </ToolBar>
      <ToolBar $grow>
        <Grip />
        <Tools items="frame roller | forces contour cube reactions deform panels+ moment resultTable |" />
      </ToolBar>
    </ToolRow>

    <ModelView>
      <Drawing viewBox="2 101 1198 799" role="img" aria-label="Spring model with nodal load">
        <g stroke="#000080" fill="#000080">
          <path d="M438 119L478 267" strokeWidth="1.600" />
          <path d="M474 266.500l7.500-2-2 6.500z" strokeWidth=".6" />
        </g>
        <text x="443" y="123" fontFamily="Liberation Sans, Arial, sans-serif" fontSize="11" fontWeight="700" fill="#000080">
          20.000
        </text>

        <g fill="none" stroke="#000" strokeWidth="3.400" strokeLinejoin="round">
          <path d="M503 361V456" />
          <path d="M597 362.500H502" strokeWidth="4.200" />
          <polyline points={horizontalSpring} strokeWidth="3.700" />
          <path d="M878.500 379L902 362.500" strokeWidth="2.400" />
          <path d="M901 362.500H973" />
          <polyline points={verticalSpring} strokeWidth="3.600" />
          <path d="M486 738L503 761" strokeWidth="2.200" />
          <path d="M503 760V832" />
        </g>

        <path d="M409 362.500H597" stroke="#00f000" strokeWidth="1.200" />
        <Hinge x={456} y={362.5} />
        <Hinge x={550} y={362.5} />
        <SlidingSupport x={409} y={362} />
        <SlidingSupport x={597} y={362} />
        <rect x="501" y="361" width="3" height="3" fill="#8c1010" />
        <FixedSupport x={972} y={372} />
        <FixedSupport x={503} y={841} />
      </Drawing>
      <Caption>
        LC1
        <br />
        Loads [kN]
      </Caption>
    </ModelView>
  </Window>
);

export default App;
